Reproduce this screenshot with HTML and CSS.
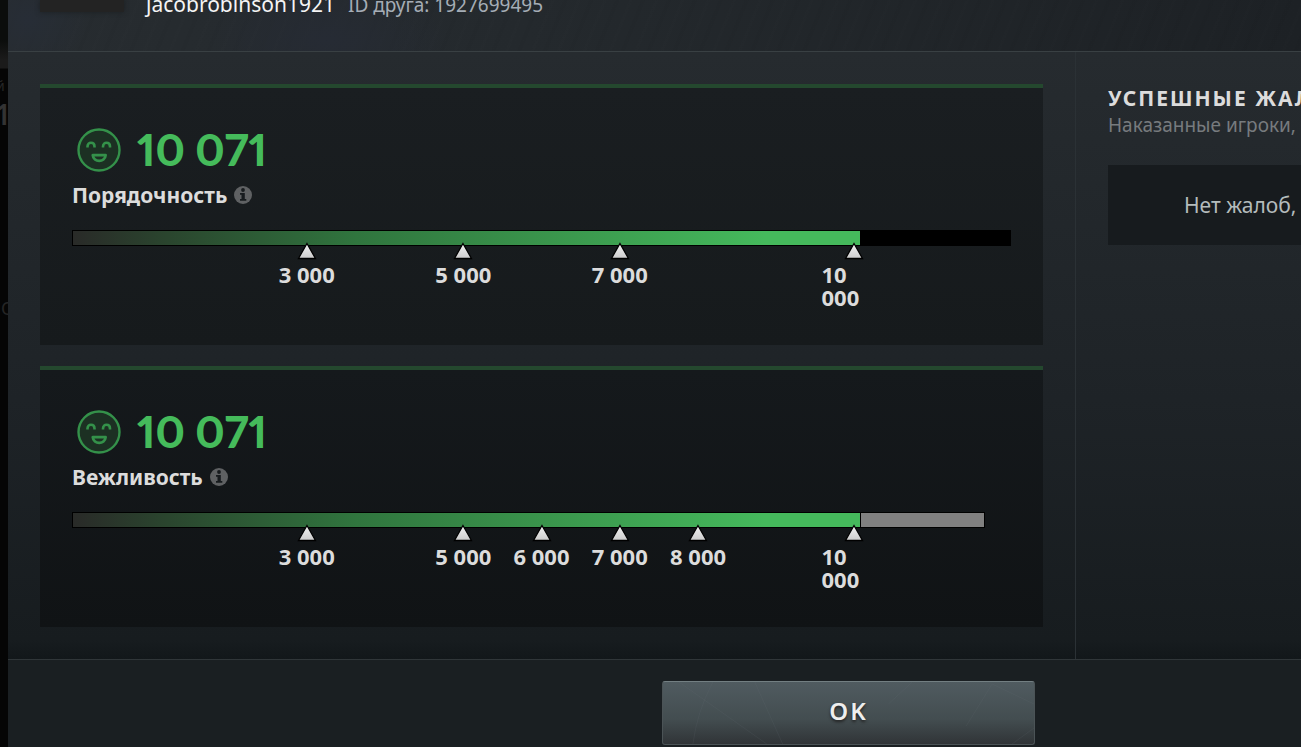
FILE: index.html
```html
<!DOCTYPE html>
<html lang="ru">
<head>
<meta charset="utf-8">
<meta name="viewport" content="width=device-width, initial-scale=1">
<title>Порядочность</title>
<link rel="stylesheet" href="styles.css">
</head>
<body>
<svg class="defs" aria-hidden="true">
  <defs>
    <linearGradient id="markerFill" x1="0" y1="0" x2="0" y2="1">
      <stop offset="0" stop-color="#f2f2f2"/><stop offset="1" stop-color="#cccccc"/>
    </linearGradient>
    <symbol id="smile" viewBox="0 0 44 44">
      <circle cx="22" cy="22" r="20.5" fill="#1c3023" stroke="#34914a" stroke-width="2.4"/>
      <path d="M10.500 19.500v-1c0-5 7-5 7 0v1M26 19.500v-1c0-5 7-5 7 0v1" fill="none" stroke="#34914a" stroke-width="2.600"/>
      <path d="M15.800 27.200h12.800c-.6 7.600-12.200 7.600-12.800 0z" fill="none" stroke="#34914a" stroke-width="2.800" stroke-linejoin="round"/>
    </symbol>
    <symbol id="info" viewBox="0 0 18 18">
      <circle cx="9" cy="9" r="9" fill="#5f6163"/>
      <circle cx="9" cy="4" r="1.900" fill="#171b1e"/>
      <path d="M6 7h4.800v6h1.500v1.700H6V13h1.500V8.700H6z" fill="#171b1e"/>
    </symbol>
    <symbol id="marker" viewBox="0 0 20 18">
      <path d="M10 1.500L18.500 16.500H1.500z" fill="url(#markerFill)" stroke="#000" stroke-width="1.300"/>
    </symbol>
  </defs>
</svg>
<div class="screen">
  <aside class="backdrop" aria-hidden="true">
    <span class="backdrop-label">й</span>
    <span class="backdrop-count">1</span>
    <span class="backdrop-link">О</span>
  </aside>
  <div class="dialog" role="dialog" aria-label="Порядочность и вежливость">
    <header class="header">
      <div class="avatar"></div>
      <div class="profile">
        <span class="name">jacobrobinson1921</span>
        <span class="friend-id">ID друга: 1927699495</span>
      </div>
    </header>
    <div class="content">
      <main class="scores">
        <section class="card">
          <div class="score"><svg class="face" aria-hidden="true"><use href="#smile"/></svg><span>10 071</span></div>
          <h2 class="title">Порядочность <svg class="info" aria-hidden="true"><use href="#info"/></svg></h2>
          <div class="scale">
            <div class="track"><div class="fill" style="width:84%"></div></div>
            <div class="mark" style="left:25%"><svg class="marker" aria-hidden="true"><use href="#marker"/></svg><span>3 000</span></div>
            <div class="mark" style="left:41.67%"><svg class="marker" aria-hidden="true"><use href="#marker"/></svg><span>5 000</span></div>
            <div class="mark" style="left:58.33%"><svg class="marker" aria-hidden="true"><use href="#marker"/></svg><span>7 000</span></div>
            <div class="mark" style="left:83.33%"><svg class="marker" aria-hidden="true"><use href="#marker"/></svg><span>10 000</span></div>
          </div>
        </section>
        <section class="card card-dark">
          <div class="score"><svg class="face" aria-hidden="true"><use href="#smile"/></svg><span>10 071</span></div>
          <h2 class="title">Вежливость <svg class="info" aria-hidden="true"><use href="#info"/></svg></h2>
          <div class="scale">
            <div class="track track-grey" style="width:97.2%"><div class="fill" style="width:86.5%"></div></div>
            <div class="mark" style="left:25%"><svg class="marker" aria-hidden="true"><use href="#marker"/></svg><span>3 000</span></div>
            <div class="mark" style="left:41.67%"><svg class="marker" aria-hidden="true"><use href="#marker"/></svg><span>5 000</span></div>
            <div class="mark" style="left:50%"><svg class="marker" aria-hidden="true"><use href="#marker"/></svg><span>6 000</span></div>
            <div class="mark" style="left:58.33%"><svg class="marker" aria-hidden="true"><use href="#marker"/></svg><span>7 000</span></div>
            <div class="mark" style="left:66.67%"><svg class="marker" aria-hidden="true"><use href="#marker"/></svg><span>8 000</span></div>
            <div class="mark" style="left:83.33%"><svg class="marker" aria-hidden="true"><use href="#marker"/></svg><span>10 000</span></div>
          </div>
        </section>
      </main>
      <aside class="reports">
        <h2 class="reports-title">УСПЕШНЫЕ ЖАЛОБЫ</h2>
        <p class="reports-note">Наказанные игроки,</p>
        <p class="reports-empty">Нет жалоб,</p>
      </aside>
    </div>
    <footer class="footer">
      <button class="ok" type="button">
        <svg class="ok-lines" viewBox="0 0 372 62" preserveAspectRatio="none" aria-hidden="true">
          <path d="M16 0L104 62M50 0Q34 30 30 62M92 0L120 62M250 0L226 22M330 2L304 44M330 2L372 22M350 62L372 46" fill="none" stroke="#6b777a" stroke-opacity=".14"/>
        </svg>
        <span class="ok-text">OK</span>
      </button>
    </footer>
  </div>
</div>
</body>
</html>
```
FILE: styles.css
```css
* { box-sizing: border-box; }
body {
  margin: 0;
  background: #050505;
  color: #dcdcdc;
  font-family: "Noto Sans", "Open Sans", sans-serif;
}
h2, p { margin: 0; }
.defs { position: absolute; width: 0; height: 0; }
.screen { display: flex; min-height: 100vh; overflow: hidden; }

.backdrop {
  flex: 0 0 8px;
  width: 8px;
  padding-top: 76px;
  overflow: hidden;
  display: flex;
  flex-direction: column;
  color: #252525;
  background: linear-gradient(#0b0d0c 0 40px, #1b1b1b 60px 68px, #050505 69px);
}
.backdrop-label { font-size: 14px; line-height: 20px; margin-left: -4px; }
.backdrop-count { font-size: 28px; line-height: 36px; margin-left: -5px; font-weight: 600; color: #333333; }
.backdrop-link { font-size: 18px; line-height: 24px; margin: 164px 0 0 1px; }

.dialog {
  flex: 1;
  min-width: 0;
  display: flex;
  flex-direction: column;
  background: linear-gradient(#262b2f 52px, #1e2327 400px, #171c1f 640px, #12171a 660px);
}
.header {
  height: 52px;
  padding-left: 32px;
  display: flex;
  gap: 22px;
  overflow: hidden;
  border-bottom: 1px solid #394043;
  background:
    radial-gradient(ellipse 60px 50px at 20px 20px, #272d36, transparent),
    radial-gradient(ellipse 120px 60px at 320px 40px, #262b34, transparent),
    repeating-linear-gradient(112deg, #ffffff01 0 3px, transparent 3px 11px, #00000006 11px 15px, transparent 15px 24px),
    linear-gradient(90deg, #272c30 0, #24292d 40%, #1d2125);
}
.avatar { width: 84px; height: 12px; background: #232323; box-shadow: 0 0 5px #1b1f22; }
.profile { display: flex; align-items: baseline; gap: 13px; margin-top: -12px; line-height: 32px; white-space: nowrap; }
.name { color: #f4f4f4; font-size: 21px; }
.friend-id { color: #a5adb6; font-size: 19px; }

.content { flex: 1; display: grid; grid-template-columns: minmax(0, 1fr) 225px; }
.scores { padding: 32px; display: grid; gap: 21px; border-right: 1px solid #2b3135; }
.card {
  padding: 36px 32px 24px;
  border-top: 4px solid #24482e;
  background: linear-gradient(#1a1e21, #161a1c);
}
.card-dark { background: linear-gradient(#15191c, #101315); }
.score {
  display: flex;
  align-items: center;
  gap: 16px;
  height: 52px;
  padding-left: 5px;
  color: #45bb5b;
  font: 900 44px/48px Lato, sans-serif;
  font-feature-settings: "pnum";
}
.score span { padding-bottom: 2px; }
.face { width: 44px; height: 44px; }
.title { display: flex; align-items: center; gap: 7px; height: 38px; font-size: 21px; font-weight: 700; line-height: 28px; }
.info { width: 18px; height: 18px; }
.scale { position: relative; margin-top: 16px; height: 84px; }
.track { height: 16px; border: 1px solid #000; background: #000; }
.track-grey { background: #808080; }
.fill { height: 100%; background: linear-gradient(90deg, #292a28, #2a452e 12%, #30753e 36%, #45b95c 88%); }
.track-grey .fill { border-right: 1px solid #000; }
.mark {
  position: absolute;
  top: 12px;
  width: max-content;
  max-width: 66px;
  transform: translateX(-50%);
  font-size: 22px;
  font-weight: 700;
  line-height: 23px;
}
.mark span { display: block; margin-top: 3px; }
.marker { display: block; width: 20px; height: 18px; margin: 0 auto; }

.reports { padding: 32px 0 32px 32px; overflow: hidden; white-space: nowrap; }
.reports-title { font-size: 21px; line-height: 28px; font-weight: 700; letter-spacing: 2px; }
.reports-note { font-size: 19px; line-height: 26px; color: #777b7e; }
.reports-empty { margin-top: 27px; padding: 26px 0 26px 76px; background: #171b1e; color: #b4bcbc; font-size: 21px; line-height: 28px; }

.footer {
  padding: 21px 0 2px 388px;
  display: flex;
  justify-content: center;
  border-top: 1px solid #303639;
  background: #1a1f22;
}
.ok {
  position: relative;
  width: 373px;
  height: 64px;
  padding: 0 0 4px;
  overflow: hidden;
  border: 1px solid #4b5356;
  border-top-color: #737f82;
  border-radius: 3px;
  color: #eeeeee;
  background: linear-gradient(#505b60, #434d50 60%, #303437);
  font: 600 24px/32px "Noto Sans", sans-serif;
  letter-spacing: 2px;
  text-shadow: 0 2px 3px #222222;
}
.ok-lines { position: absolute; inset: 0; width: 100%; height: 100%; }
.ok-text { position: relative; }
```
